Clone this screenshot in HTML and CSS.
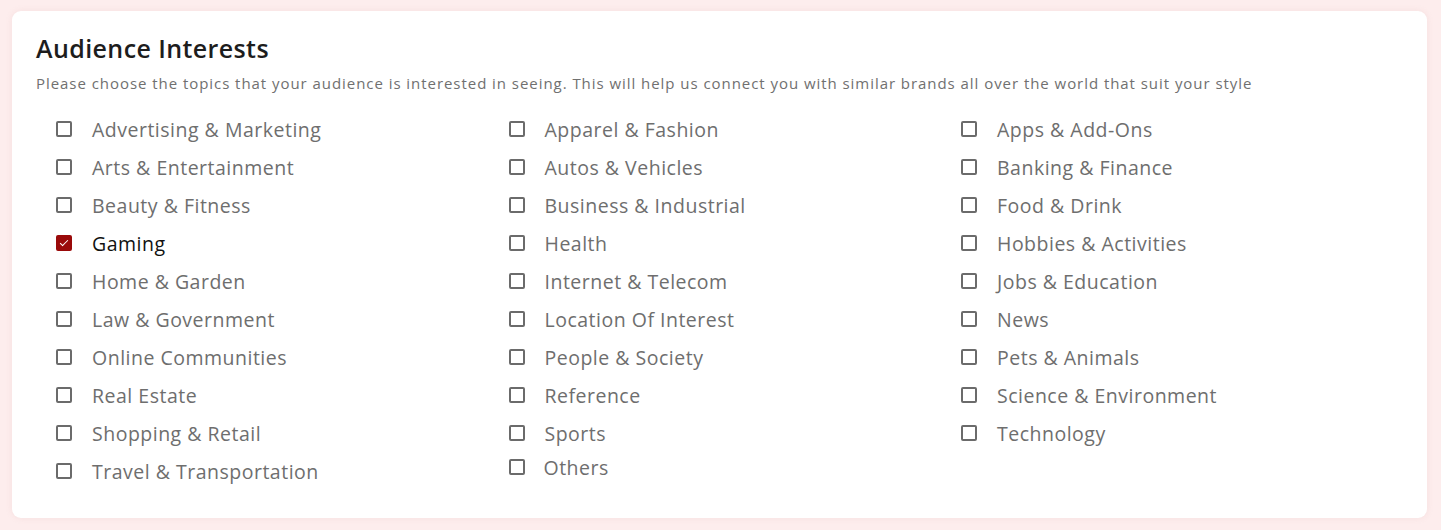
FILE: index.html
```html
<!DOCTYPE html>
<html lang="en">
<head>
  <meta charset="UTF-8" />
  <title>Audience Interests</title>
  <link rel="stylesheet" href="styles.css">
</head>
<body>

  <section class="card">
    <h2>Audience Interests</h2>
    <p class="hint">Please choose the topics that your audience is interested in seeing. This will help us connect you with similar brands all over the world that suit your style</p>

    <div class="interests">
      <div class="col">
        <label class="item"><input type="checkbox"> <span>Advertising &amp; Marketing</span></label>
        <label class="item"><input type="checkbox"> <span>Arts &amp; Entertainment</span></label>
        <label class="item"><input type="checkbox"> <span>Beauty &amp; Fitness</span></label>
        <label class="item"><input type="checkbox" checked> <span>Gaming</span></label>
        <label class="item"><input type="checkbox"> <span>Home &amp; Garden</span></label>
        <label class="item"><input type="checkbox"> <span>Law &amp; Government</span></label>
        <label class="item"><input type="checkbox"> <span>Online Communities</span></label>
        <label class="item"><input type="checkbox"> <span>Real Estate</span></label>
        <label class="item"><input type="checkbox"> <span>Shopping &amp; Retail</span></label>
        <label class="item"><input type="checkbox"> <span>Travel &amp; Transportation</span></label>
      </div>
      <div class="col">
        <label class="item"><input type="checkbox"> <span>Apparel &amp; Fashion</span></label>
        <label class="item"><input type="checkbox"> <span>Autos &amp; Vehicles</span></label>
        <label class="item"><input type="checkbox"> <span>Business &amp; Industrial</span></label>
        <label class="item"><input type="checkbox"> <span>Health</span></label>
        <label class="item"><input type="checkbox"> <span>Internet &amp; Telecom</span></label>
        <label class="item"><input type="checkbox"> <span>Location Of Interest</span></label>
        <label class="item"><input type="checkbox"> <span>People &amp; Society</span></label>
        <label class="item"><input type="checkbox"> <span>Reference</span></label>
        <label class="item"><input type="checkbox"> <span>Sports</span></label>
        <label class="item other"><input type="checkbox"> <span>Others</span></label>
      </div>
      <div class="col">
        <label class="item"><input type="checkbox"> <span>Apps &amp; Add-Ons</span></label>
        <label class="item"><input type="checkbox"> <span>Banking &amp; Finance</span></label>
        <label class="item"><input type="checkbox"> <span>Food &amp; Drink</span></label>
        <label class="item"><input type="checkbox"> <span>Hobbies &amp; Activities</span></label>
        <label class="item"><input type="checkbox"> <span>Jobs &amp; Education</span></label>
        <label class="item"><input type="checkbox"> <span>News</span></label>
        <label class="item"><input type="checkbox"> <span>Pets &amp; Animals</span></label>
        <label class="item"><input type="checkbox"> <span>Science &amp; Environment</span></label>
        <label class="item"><input type="checkbox"> <span>Technology</span></label>
      </div>
    </div>
  </section>

</body>
</html>
```

FILE: styles.css
```css
body {
  margin: 0;
  padding: 11px 14px 11px 12px;
  background: #fdeded;
  font-family: 'Open Sans', sans-serif;
}

.card {
  background: #fff;
  border-radius: 9px;
  padding: 22px 24px 28px 24px;
  box-shadow: 0 0 6px rgba(200, 150, 150, 0.15);
}

h2 {
  margin: 0;
  font-size: 25px;
  font-weight: 600;
  letter-spacing: 0.4px;
  color: #1d1d1d;
  line-height: 30px;
}

.hint {
  margin: 10px 0 0;
  font-size: 15px;
  letter-spacing: 0.95px;
  color: #707070;
  line-height: 20px;
}

.interests {
  display: grid;
  grid-template-columns: repeat(3, 452.5px);
  padding: 17px 0 0 20px;
}

.col {
  display: flex;
  flex-direction: column;
}

.item {
  display: flex;
  align-items: center;
  height: 38px;
  font-size: 19.5px;
  letter-spacing: 0.5px;
  color: #6e6e6e;
  cursor: pointer;
}

.item input {
  appearance: none;
  box-sizing: border-box;
  margin: 0 20px 0 0;
  width: 16px;
  height: 16px;
  border: 2px solid #6b6b6b;
  border-radius: 2px;
  flex-shrink: 0;
  display: grid;
  place-items: center;
}

.item input:checked {
  background: #9a0a0a;
  border-color: #9a0a0a;
}

.item input:checked::after {
  content: '';
  width: 7px;
  height: 3px;
  border-left: 1.5px solid #fff;
  border-bottom: 1.5px solid #fff;
  transform: translateY(-1px) rotate(-45deg);
}

.item input:checked + span {
  color: #111;
}

.item.other {
  height: 30px;
}

.item.other input {
  margin-right: 19px;
}
```
